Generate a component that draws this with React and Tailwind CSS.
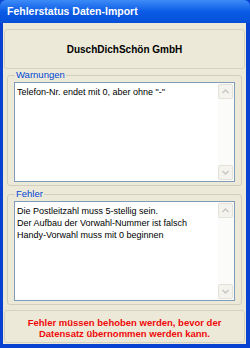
import React from 'react';

const font = { fontFamily: '"Liberation Sans", Arial, sans-serif' };

const ScrollArrow = ({ down }) => (
    <div className="w-[15px] h-[15px] rounded-[2px] border border-[#E4E2D8] bg-[#F4F3EE] flex items-center justify-center">
        <svg width="7" height="5" viewBox="0 0 7 5">
            <path d={down ? 'M0.5 1 L3.5 4 L6.5 1' : 'M0.5 4 L3.5 1 L6.5 4'} fill="none" stroke="#C9C7BA" strokeWidth="1.4" />
        </svg>
    </div>
);

const ListBox = ({ lines }) => (
    <div className="flex h-[100px] border border-[#7F9DB9] bg-white">
        <div className="flex-1 pl-[2px] pt-[3px] text-[9px] leading-[12px] text-black">
            {lines.map((l) => (
                <div key={l}>{l}</div>
            ))}
        </div>
        <div className="w-[16px] flex flex-col justify-between py-[1px] pr-[1px] bg-[#FBFBF9]">
            <ScrollArrow />
            <ScrollArrow down />
        </div>
    </div>
);

const Group = ({ label, lines, className }) => (
    <fieldset className={`mx-[3px] border border-[#D0CEBF] rounded-[3px] px-[6px] pb-[3px] pt-[1px] ${className}`}>
        <legend className="ml-[1px] px-[1px] text-[9.5px] leading-[12px] text-[#0046D5]">{label}</legend>
        <ListBox lines={lines} />
    </fieldset>
);

export default function App() {
    return (
        <div style={font} className="w-[250px] h-[348px] flex flex-col bg-[#0842D0]">
            <div className="h-[23px] shrink-0 flex items-center px-[7px] bg-gradient-to-b from-[#3D8BF7] via-[#0A5BE6] to-[#0650D8] rounded-t-[6px]">
                <span className="text-white font-bold text-[10.5px] leading-none">Fehlerstatus Daten-Import</span>
            </div>
            <div className="flex-1 ml-[3px] mr-[4px] mb-[4px] bg-[#ECE9D8] flex flex-col px-[1px] pt-[6px]">
                <div className="h-[40px] border border-[#D5D2C1] rounded-[3px] flex items-center justify-center">
                    <span className="font-bold text-[10px] text-black">DuschDichSchön GmbH</span>
                </div>
                <Group className="mt-[0px]" label="Warnungen" lines={['Telefon-Nr. endet mit 0, aber ohne "-"']} />
                <Group
                    className="mt-[2px]"
                    label="Fehler"
                    lines={[
                        'Die Postleitzahl muss 5-stellig sein.',
                        'Der Aufbau der Vorwahl-Nummer ist falsch',
                        'Handy-Vorwahl muss mit 0 beginnen',
                    ]}
                />
                <div className="mt-[5px] flex-1 mb-[1px] border border-[#D5D2C1] rounded-[3px] flex flex-col items-center justify-center pt-[3px] text-[9.5px] leading-[11px] font-bold text-[#F00A0A] text-center">
                    <div>Fehler müssen behoben werden, bevor der</div>
                    <div>Datensatz übernommen werden kann.</div>
                </div>
            </div>
        </div>
    );
}
